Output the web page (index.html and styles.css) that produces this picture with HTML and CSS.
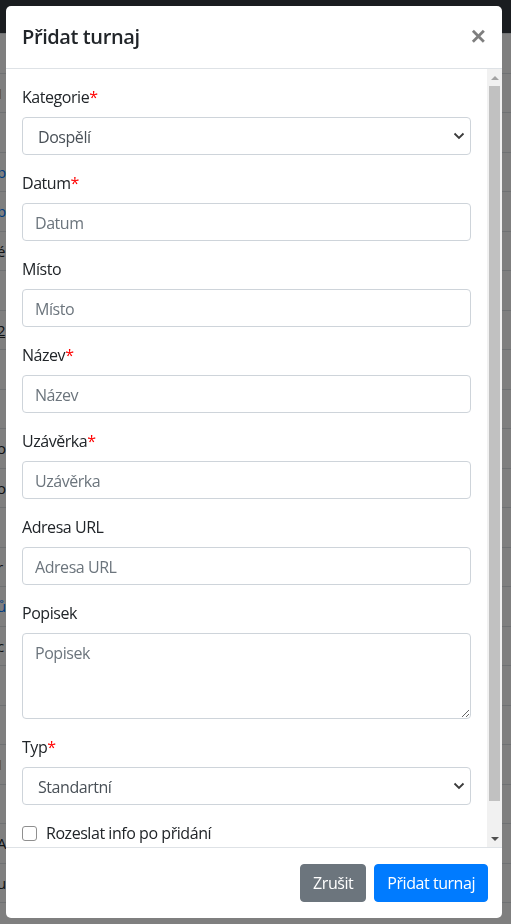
FILE: index.html
```html
<!DOCTYPE html>
<html lang="cs">
<head>
<meta charset="utf-8">
<title>Přidat turnaj</title>
<link rel="stylesheet" href="styles.css">
</head>
<body>
<div class="page">
  <nav class="navbar"></nav>
  <div class="table">
    <div class="row"></div>
    <div class="row"><span class="warn">I</span></div>
    <div class="row"></div>
    <div class="row"><span class="link">bl</span></div>
    <div class="row"><span class="link">bl</span></div>
    <div class="row"><span>é</span></div>
    <div class="row"></div>
    <div class="row"><span class="under">2</span></div>
    <div class="row"></div>
    <div class="row"></div>
    <div class="row"><span>o</span></div>
    <div class="row"><span>o</span></div>
    <div class="row"></div>
    <div class="row"><span>r</span></div>
    <div class="row"><span class="link">ů</span></div>
    <div class="row"><span>c</span></div>
    <div class="row"></div>
    <div class="row"></div>
    <div class="row"><span class="warn">I</span></div>
    <div class="row"></div>
    <div class="row"><span>Al</span></div>
    <div class="row"><span>u</span></div>
    <div class="row"></div>
  </div>
</div>
<div class="backdrop"></div>
<div class="modal">
  <div class="modal-dialog">
    <div class="modal-content">
      <div class="modal-header">
        <h5 class="modal-title">Přidat turnaj</h5>
        <button class="close" type="button" aria-label="Close">×</button>
      </div>
      <div class="modal-main">
        <form class="modal-body">
          <div class="form-group">
            <label>Kategorie<span class="req">*</span></label>
            <div class="select-wrap">
              <select class="form-control select"><option>Dospělí</option></select>
              <svg class="chev" width="12" height="8" viewBox="0 0 12 8"><path d="M1.5 1.5 L6 6 L10.5 1.5" fill="none" stroke="#3a3a3a" stroke-width="1.8"/></svg>
            </div>
          </div>
          <div class="form-group">
            <label>Datum<span class="req">*</span></label>
            <input class="form-control" placeholder="Datum">
          </div>
          <div class="form-group">
            <label>Místo</label>
            <input class="form-control" placeholder="Místo">
          </div>
          <div class="form-group">
            <label>Název<span class="req">*</span></label>
            <input class="form-control" placeholder="Název">
          </div>
          <div class="form-group">
            <label>Uzávěrka<span class="req">*</span></label>
            <input class="form-control" placeholder="Uzávěrka">
          </div>
          <div class="form-group">
            <label>Adresa URL</label>
            <input class="form-control" placeholder="Adresa URL">
          </div>
          <div class="form-group">
            <label>Popisek</label>
            <textarea class="form-control textarea" rows="3" placeholder="Popisek"></textarea>
          </div>
          <div class="form-group">
            <label>Typ<span class="req">*</span></label>
            <div class="select-wrap">
              <select class="form-control select"><option>Standartní</option></select>
              <svg class="chev" width="12" height="8" viewBox="0 0 12 8"><path d="M1.5 1.5 L6 6 L10.5 1.5" fill="none" stroke="#3a3a3a" stroke-width="1.8"/></svg>
            </div>
          </div>
          <div class="form-check">
            <span class="check-box"></span>
            <span class="check-label">Rozeslat info po přidání</span>
          </div>
        </form>
        <div class="scrollbar">
          <div class="sb-btn"><span class="tri-up"></span></div>
          <div class="sb-track"><div class="sb-thumb"></div></div>
          <div class="sb-btn"><span class="tri-down"></span></div>
        </div>
      </div>
      <div class="modal-footer">
        <button type="button" class="btn btn-secondary">Zrušit</button>
        <button type="button" class="btn btn-primary">Přidat turnaj</button>
      </div>
    </div>
  </div>
</div>
</body>
</html>
```
FILE: styles.css
```css
* { box-sizing: border-box; }
html, body { margin: 0; padding: 0; height: 100%; }
body {
  font-family: "Open Sans", "Noto Sans", sans-serif;
  font-size: 16px;
  line-height: 1.5;
  letter-spacing: -0.45px;
  color: #212529;
  background: #fff;
  overflow: hidden;
}
.page { width: 100%; }
.navbar { height: 33px; background: #343a40; }
.table { display: flex; flex-direction: column; }
.row {
  height: 39.5px;
  border-top: 1px solid #dee2e6;
  display: flex;
  align-items: center;
  font-size: 15px;
  color: #212529;
}
.row span { text-indent: -3px; display: block; }
.row .link { color: #007bff; }
.row .warn { color: #c69500; font-weight: 700; }
.row .under { text-decoration: underline; }

.backdrop {
  position: fixed;
  inset: 0;
  background: rgba(0, 0, 0, .5);
}
.modal {
  position: fixed;
  inset: 0;
  padding: 6px 9px 6px 6px;
}
.modal-dialog { width: 496px; height: 100%; }
.modal-content {
  height: 100%;
  display: flex;
  flex-direction: column;
  background: #fff;
  border-radius: 5px;
  overflow: hidden;
}
.modal-header {
  display: flex;
  align-items: flex-start;
  padding: 16px;
  border-bottom: 1px solid #dee2e6;
}
.modal-title {
  margin: 0;
  font-size: 20px;
  font-weight: 600;
  line-height: 30px;
  letter-spacing: -0.4px;
}
.close {
  margin: -16px -16px -16px auto;
  padding: 17px 16px 14px;
  background: none;
  border: 0;
  font-family: "Liberation Sans", sans-serif;
  font-size: 26px;
  font-weight: 700;
  line-height: 1;
  color: #000;
  opacity: .5;
}
.modal-main {
  flex: 1;
  min-height: 0;
  display: flex;
}
.modal-body {
  flex: 1;
  min-width: 0;
  margin: 0;
  padding: 16px;
  overflow: hidden;
}
.form-group { margin-bottom: 16px; }
label { display: inline-block; margin-bottom: 8px; }
.req { color: #f00; }
.form-control {
  display: block;
  width: 100%;
  height: 38px;
  padding: 7px 12px 5px;
  font-family: inherit;
  font-size: 16px;
  line-height: 24px;
  letter-spacing: -0.45px;
  color: #495057;
  background: #fff;
  border: 1px solid #ced4da;
  border-radius: 4px;
  outline: none;
}
.form-control::placeholder { color: #6c757d; opacity: 1; }
.select-wrap { position: relative; }
.select {
  appearance: none;
  -webkit-appearance: none;
  padding-left: 15px;
  color: #495057;
}
.chev { position: absolute; right: 6px; top: 15px; }
.textarea { height: 86px; resize: vertical; }
.form-check {
  display: flex;
  align-items: center;
  gap: 9px;
  line-height: 24px;
}
.check-box {
  width: 15px;
  height: 15px;
  border: 1px solid #8f8f8f;
  border-radius: 3px;
  background: #fff;
  flex: none;
}
.scrollbar {
  width: 15px;
  flex: none;
  display: flex;
  flex-direction: column;
  background: #f1f1f1;
}
.sb-btn {
  height: 17px;
  display: flex;
  align-items: center;
  justify-content: center;
  flex: none;
}
.sb-track { flex: 1; padding: 0 2px 29px; display: flex; }
.sb-thumb { flex: 1; background: #c1c1c1; }
.tri-up {
  width: 0; height: 0;
  border-left: 4px solid transparent;
  border-right: 4px solid transparent;
  border-bottom: 4px solid #a3a3a3;
}
.tri-down {
  width: 0; height: 0;
  border-left: 4px solid transparent;
  border-right: 4px solid transparent;
  border-top: 4px solid #505050;
}
.modal-footer {
  display: flex;
  justify-content: flex-end;
  align-items: center;
  padding: 12px 10px 12px 12px;
  border-top: 1px solid #dee2e6;
}
.btn {
  margin: 4px;
  padding: 6px 12px;
  font-family: inherit;
  font-size: 16px;
  line-height: 24px;
  letter-spacing: -0.45px;
  color: #fff;
  border: 1px solid transparent;
  border-radius: 4px;
}
.btn-secondary { background: #6c757d; border-color: #6c757d; }
.btn-primary { background: #007bff; border-color: #007bff; }
```
